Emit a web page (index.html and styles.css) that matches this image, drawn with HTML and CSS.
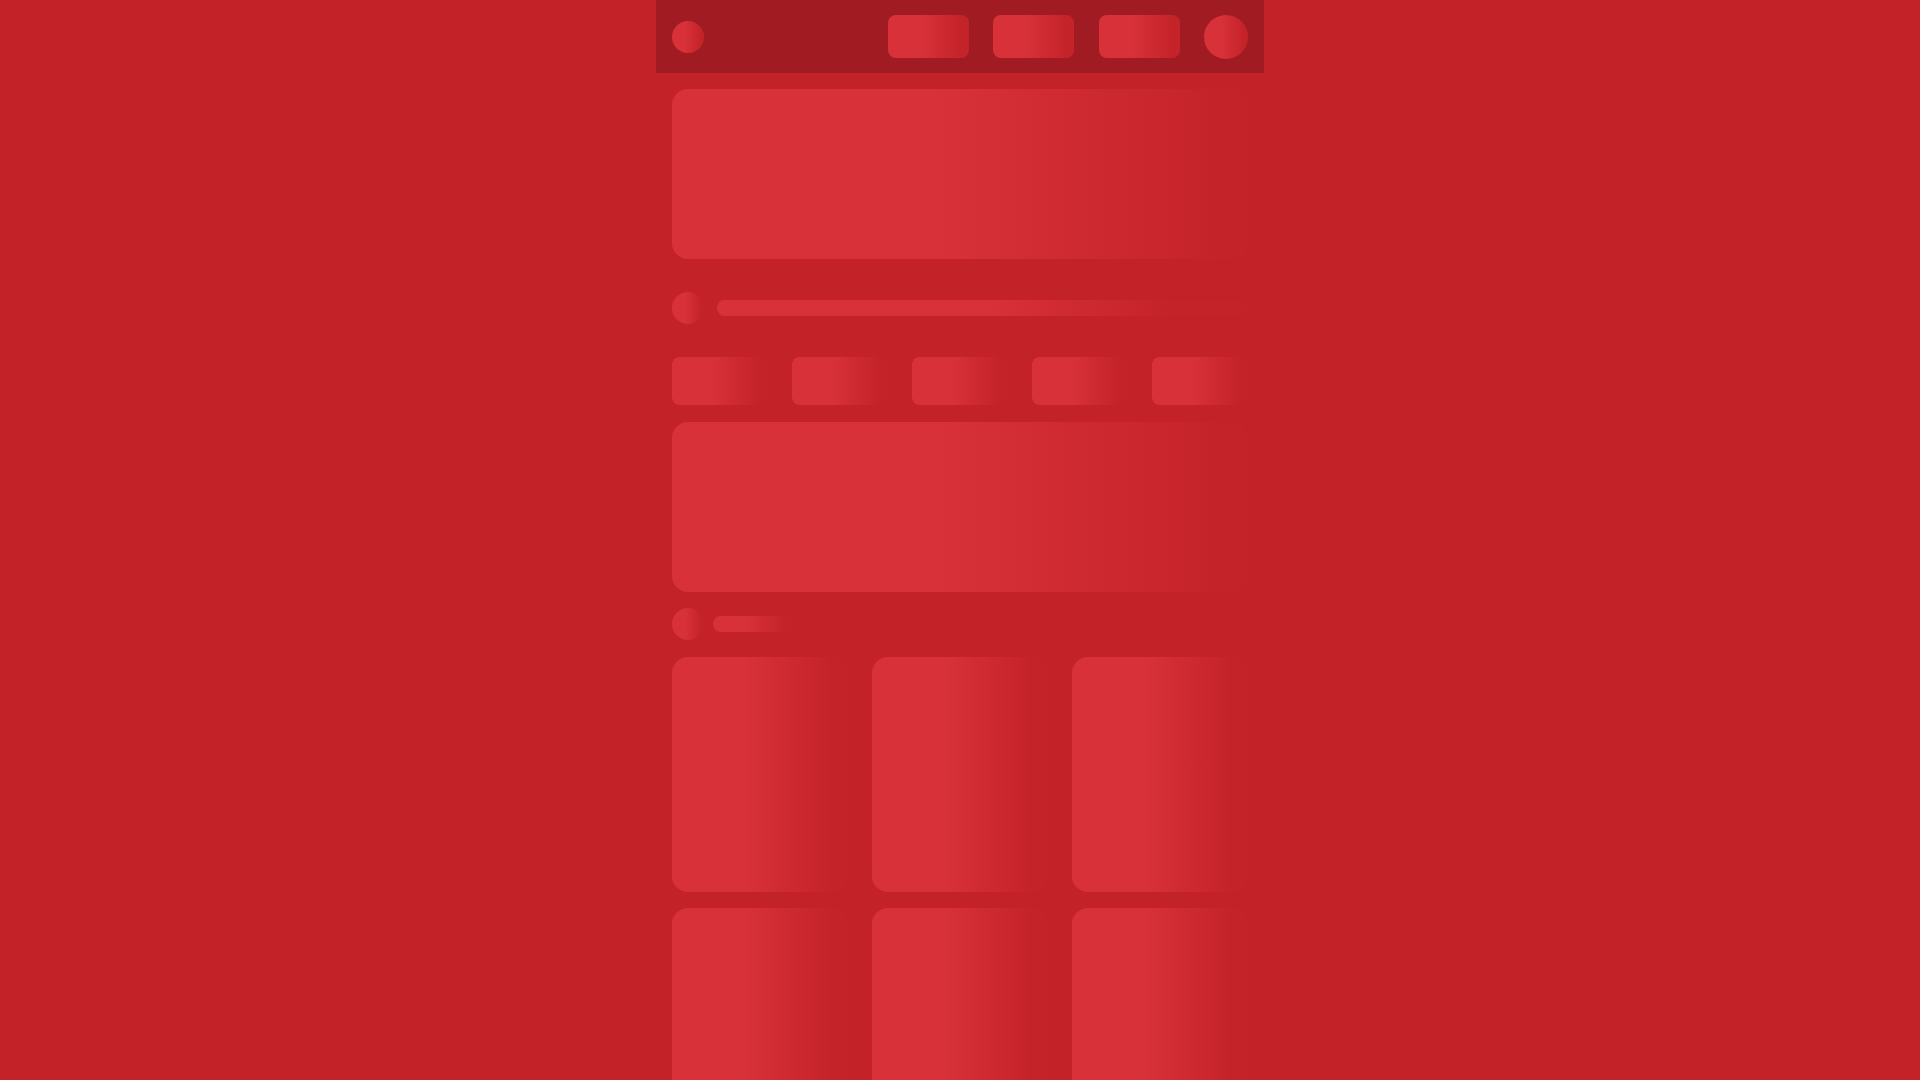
FILE: index.html
```html
<!DOCTYPE html>
<html lang="en">
<head>
<meta charset="utf-8">
<title>Loading</title>
<link rel="stylesheet" href="styles.css">
</head>
<body>
<div class="app">
  <header class="topbar">
    <div class="logo sk"></div>
    <nav class="nav">
      <div class="nav-btn sk"></div>
      <div class="nav-btn sk"></div>
      <div class="nav-btn sk"></div>
      <div class="avatar sk"></div>
    </nav>
  </header>
  <main class="content">
    <div class="hero sk"></div>
    <div class="row row-lg">
      <div class="dot sk"></div>
      <div class="line line-full sk"></div>
    </div>
    <div class="chips">
      <div class="chip sk"></div>
      <div class="chip sk"></div>
      <div class="chip sk"></div>
      <div class="chip sk"></div>
      <div class="chip sk"></div>
    </div>
    <div class="banner sk"></div>
    <div class="row row-sm">
      <div class="dot sk"></div>
      <div class="line line-short sk"></div>
    </div>
    <div class="grid">
      <div class="card sk"></div>
      <div class="card sk"></div>
      <div class="card sk"></div>
      <div class="card sk"></div>
      <div class="card sk"></div>
      <div class="card sk"></div>
    </div>
  </main>
</div>
</body>
</html>
```

FILE: styles.css
```css
html, body {
  margin: 0;
  padding: 0;
  height: 100%;
  overflow: hidden;
}
body {
  background: #c42229;
  font-family: "Liberation Sans", Arial, sans-serif;
}
.app {
  width: 608px;
  margin: 0 auto;
}
.sk {
  background: linear-gradient(90deg, #d83139 0%, #d83139 40%, #c5232a 90%, #c5232a 100%);
}
.topbar {
  height: 73px;
  background: #a11c22;
  padding: 0 16px;
  display: flex;
  align-items: center;
}
.logo {
  width: 32px;
  height: 32px;
  border-radius: 50%;
}
.nav {
  margin-left: auto;
  display: flex;
  align-items: center;
  gap: 24.5px;
}
.nav-btn {
  width: 81px;
  height: 43px;
  border-radius: 8px;
}
.avatar {
  width: 44px;
  height: 44px;
  border-radius: 50%;
}
.content {
  padding: 16px;
  display: flex;
  flex-direction: column;
}
.hero, .banner {
  height: 170px;
  border-radius: 16px;
  background: linear-gradient(90deg, #d83139 0%, #d83139 45%, #c5232a 95%, #c5232a 100%);
}
.row {
  display: flex;
  align-items: center;
}
.row-lg {
  padding: 33px 0;
  gap: 13px;
}
.row-sm {
  margin-top: 16px;
  gap: 9px;
}
.dot {
  width: 32px;
  height: 32px;
  border-radius: 50%;
  flex: none;
}
.line {
  height: 16px;
  border-radius: 8px;
}
.line-full {
  flex: 1;
  background: linear-gradient(90deg, #d83139 0%, #d83139 50%, #c5232a 85%, #c5232a 100%);
}
.line-short {
  width: 80px;
}
.chips {
  display: grid;
  grid-template-columns: repeat(5, 1fr);
  gap: 24px;
}
.chip {
  height: 48px;
  border-radius: 8px;
}
.banner {
  margin-top: 17px;
}
.grid {
  margin-top: 17px;
  display: grid;
  grid-template-columns: repeat(3, 1fr);
  column-gap: 24px;
  row-gap: 16px;
}
.card {
  height: 235px;
  border-radius: 16px;
}
```
